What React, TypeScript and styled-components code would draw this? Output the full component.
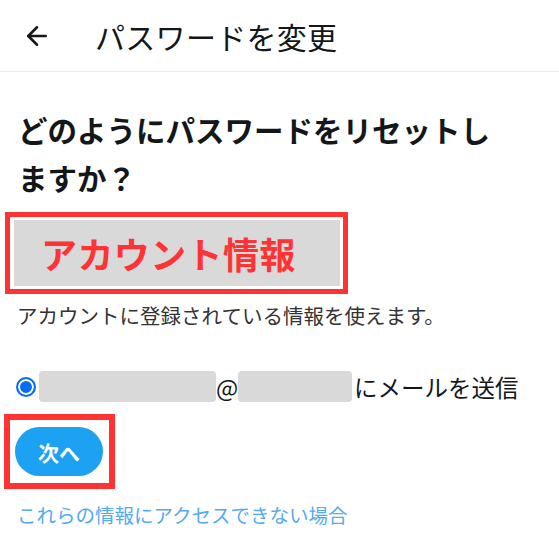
import React from 'react';
import styled, { createGlobalStyle } from 'styled-components';
import { ArrowLeft } from 'lucide-react';

const GlobalStyle = createGlobalStyle`
    body {
        margin: 0;
        background: #ffffff;
        font-family: "Noto Sans CJK JP", "Noto Sans", sans-serif;
        color: #14171a;
    }
`;

const Page = styled.div`
    width: 559px;
`;

const Header = styled.header`
    display: flex;
    align-items: center;
    height: 72px;
    padding-left: 22px;
    border-bottom: 1px solid #e6ecf0;
    box-sizing: border-box;
`;

const BackIcon = styled.span`
    display: flex;
    color: #14171a;
`;

const Title = styled.h1`
    margin: 0 0 0 43px;
    font-size: 30px;
    font-weight: 400;
    line-height: 1;
    letter-spacing: 0.3px;
`;

const Main = styled.main`
    display: flex;
    flex-direction: column;
    align-items: flex-start;
`;

const Heading = styled.h2`
    margin: 33px 0 0 18px;
    font-size: 29.5px;
    font-weight: 700;
    line-height: 48px;
    width: 500px;
`;

const Highlight = styled.div<{ $mt: number; $ml: number; $bw: number }>`
    margin-top: ${p => p.$mt}px;
    margin-left: ${p => p.$ml}px;
    border: ${p => p.$bw}px solid #ff3333;
`;

const LabelBox = styled.div`
    display: flex;
    align-items: center;
    width: 326px;
    height: 66px;
    margin: 3px 3px 3px 4px;
    padding-left: 27px;
    box-sizing: border-box;
    background: #d9d9d9;
    color: #ff3333;
    font-size: 36px;
    font-weight: 700;
    letter-spacing: 0.4px;
`;

const Note = styled.p`
    margin: 7px 0 0 17px;
    font-size: 20.5px;
    line-height: 28px;
    color: #333333;
`;

const MailRow = styled.label`
    display: flex;
    align-items: center;
    height: 31px;
    margin-top: 42px;
    padding-left: 16px;
    font-size: 23.5px;
    color: #14171a;
`;

const Radio = styled.span`
    width: 16px;
    height: 16px;
    border-radius: 50%;
    border: 2px solid #0a6cf2;
    background: #0a6cf2;
    box-shadow: inset 0 0 0 2px #ffffff;
    margin-right: 3px;
    flex: none;
`;

const Masked = styled.span<{ $w: number }>`
    width: ${p => p.$w}px;
    height: 31px;
    border-radius: 4px;
    background: #d9d9d9;
    flex: none;
`;

const At = styled.span`
    width: 22px;
    text-align: center;
`;

const Rest = styled.span`
    margin-left: 2px;
`;

const NextButton = styled.button`
    display: block;
    width: 88px;
    height: 49px;
    margin: 7px 6px 7px 5px;
    border: none;
    border-radius: 25px;
    background: #1da1f2;
    color: #ffffff;
    font-family: inherit;
    font-size: 21px;
    font-weight: 700;
`;

const HelpLink = styled.a`
    margin: 14px 0 0 17px;
    font-size: 19.5px;
    line-height: 24px;
    color: #55aaef;
    text-decoration: none;
`;

const App = () => {
    return (
        <Page>
            <GlobalStyle />
            <Header>
                <BackIcon><ArrowLeft size={30} strokeWidth={2} /></BackIcon>
                <Title>パスワードを変更</Title>
            </Header>
            <Main>
                <Heading>どのようにパスワードをリセットしますか？</Heading>
                <Highlight $mt={11} $ml={5} $bw={5}>
                    <LabelBox>アカウント情報</LabelBox>
                </Highlight>
                <Note>アカウントに登録されている情報を使えます。</Note>
                <MailRow>
                    <Radio />
                    <Masked $w={177} />
                    <At>@</At>
                    <Masked $w={114} />
                    <Rest>にメールを送信</Rest>
                </MailRow>
                <Highlight $mt={12} $ml={4} $bw={6}>
                    <NextButton>次へ</NextButton>
                </Highlight>
                <HelpLink href="#">これらの情報にアクセスできない場合</HelpLink>
            </Main>
        </Page>
    );
};

export default App;
